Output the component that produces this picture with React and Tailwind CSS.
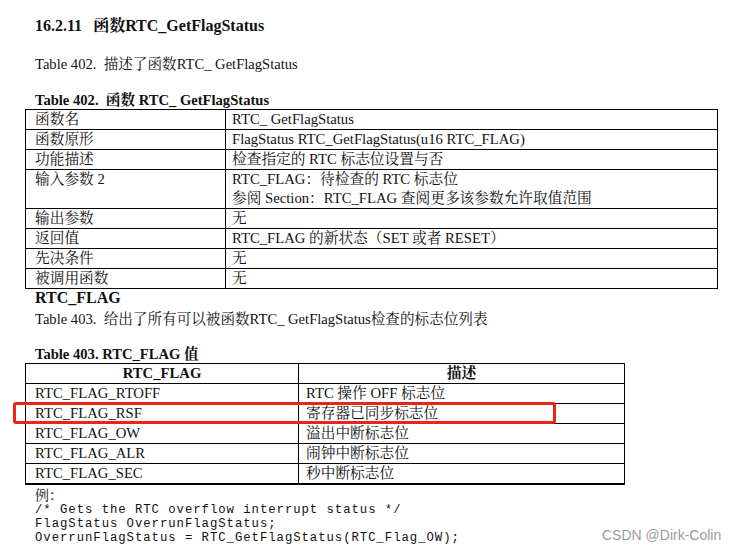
const serif = "font-['Liberation_Serif','Noto_Serif_CJK_SC','Noto_Sans_CJK_SC',serif]";

const fnRows = [
  ['函数名', ['RTC_ GetFlagStatus']],
  ['函数原形', ['FlagStatus RTC_GetFlagStatus(u16 RTC_FLAG)']],
  ['功能描述', ['检查指定的 RTC 标志位设置与否']],
  ['输入参数 2', ['RTC_FLAG：待检查的 RTC 标志位', '参阅 Section：RTC_FLAG 查阅更多该参数允许取值范围']],
  ['输出参数', ['无']],
  ['返回值', ['RTC_FLAG 的新状态（SET 或者 RESET）']],
  ['先决条件', ['无']],
  ['被调用函数', ['无']],
];

const flagRows = [
  ['RTC_FLAG_RTOFF', 'RTC 操作 OFF 标志位'],
  ['RTC_FLAG_RSF', '寄存器已同步标志位'],
  ['RTC_FLAG_OW', '溢出中断标志位'],
  ['RTC_FLAG_ALR', '闹钟中断标志位'],
  ['RTC_FLAG_SEC', '秒中断标志位'],
];

const code = [
  '/* Gets the RTC overflow interrupt status */',
  'FlagStatus OverrunFlagStatus;',
  'OverrunFlagStatus = RTC_GetFlagStatus(RTC_Flag_OW);',
];

export default function App() {
  return (
    <div className={`relative w-[745px] h-[551px] bg-white text-[#111] overflow-hidden ${serif}`}>
      <div className="pt-[16px] pl-[35px] h-[36px] text-[16px] leading-[20px] font-bold whitespace-pre">
        16.2.11<span className="ml-[11px]">函数RTC_GetFlagStatus</span>
      </div>
      <div className="mt-[19px] pl-[35px] text-[14.6px] leading-[18px] whitespace-pre">
        Table 402.  描述了函数RTC_ GetFlagStatus
      </div>
      <div className="mt-[18px] pl-[35px] text-[14.6px] leading-[18px] font-bold whitespace-pre">
        Table 402.  函数 RTC_ GetFlagStatus
      </div>

      {/* Table 402 */}
      <div className="ml-[25px] w-[693px] border border-black divide-y divide-black text-[14.7px] leading-[19px]">
        {fnRows.map(([k, vals]) => (
          <div key={k} className="flex">
            <div className="w-[200px] shrink-0 border-r border-black pl-[9px]">{k}</div>
            <div className="pl-[6px]">
              {vals.map((v) => (
                <div key={v} className="h-[19px]">{v}</div>
              ))}
            </div>
          </div>
        ))}
      </div>

      <div className="pl-[35px] text-[16px] leading-[18px] font-bold">RTC_FLAG</div>
      <div className="mt-[3px] pl-[35px] text-[14.6px] leading-[18px] whitespace-pre">
        Table 403.  给出了所有可以被函数RTC_ GetFlagStatus检查的标志位列表
      </div>
      <div className="mt-[17px] pl-[35px] text-[14.6px] leading-[18px] font-bold">
        Table 403. RTC_FLAG 值
      </div>

      {/* Table 403 */}
      <div className="relative ml-[25px] w-[600px] border border-black divide-y divide-black text-[14.7px] leading-[19px]">
        <div className="flex font-bold">
          <div className="w-[273px] shrink-0 border-r border-black text-center">RTC_FLAG</div>
          <div className="flex-1 text-center">描述</div>
        </div>
        {flagRows.map(([k, v]) => (
          <div key={k} className="flex">
            <div className="w-[273px] shrink-0 border-r border-black pl-[9px]">{k}</div>
            <div className="pl-[7px]">{v}</div>
          </div>
        ))}
        <div className="absolute left-[-13px] top-[38px] w-[543px] h-[22px] border-[3px] border-[#ee2318] rounded-[3px]" />
      </div>

      <div className="mt-[4px] pl-[35px] text-[14px] leading-[14px]">例：</div>
      <div className="pl-[35px] font-['Liberation_Mono',monospace] text-[12.3px] tracking-[0.95px] leading-[14px] whitespace-pre">
        {code.map((l) => (
          <div key={l}>{l}</div>
        ))}
      </div>

      <div className="absolute left-[602px] top-[526px] font-['Liberation_Sans',sans-serif] text-[14px] leading-[18px] text-[#9b9b9b]">
        CSDN @Dirk-Colin
      </div>
    </div>
  );
}
